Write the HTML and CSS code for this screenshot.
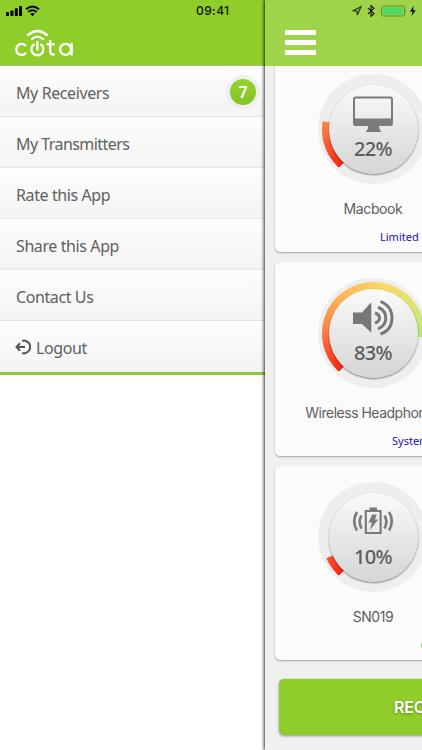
FILE: index.html
```
<!DOCTYPE html>
<html lang="en">
<head>
<meta charset="utf-8">
<title>Cota</title>
<link rel="stylesheet" href="styles.css">
</head>
<body>
<div class="app">
  <nav class="drawer">
    <header class="drawer-head">
      <svg class="logo" viewBox="0 0 60 30" fill="none" stroke="#fff" stroke-width="2.300" stroke-linecap="round" aria-label="cota">
        <path d="M10.300 15.400A5.300 5.600 0 1 0 10.300 23.400"/>
        <path d="M18.600 14.600A6 6 0 1 0 26.200 14.600M22.400 12v7.500"/>
        <path d="M35.200 11.200v9.800q0 3.600 3.600 3.600M32.300 14.300h6.700"/>
        <circle cx="50.600" cy="19.300" r="5.500"/><path d="M56.700 14v10.600"/>
        <path d="M13 5Q22.400-3 32 5M17 9Q22.400 4.200 28 9"/>
      </svg>
    </header>
    <ul class="menu">
      <li><span class="label">My Receivers</span><span class="badge">7</span></li>
      <li><span class="label long">My Transmitters</span></li>
      <li><span class="label">Rate this App</span></li>
      <li><span class="label">Share this App</span></li>
      <li><span class="label">Contact Us</span></li>
      <li><svg class="logout" viewBox="0 0 16 16" fill="none" stroke="#555" stroke-width="2"><path d="M7.200 2.200Q9 .8 11 2A6.300 6.300 0 0 1 11 13.800Q9 15 7.200 13.800M1.500 8H10M5 4.300 1.500 8 5 11.700"/></svg><span class="label">Logout</span></li>
    </ul>
  </nav>

  <main class="panel">
    <header class="panel-head"><span class="burger"><i></i><i></i><i></i></span></header>
    <div class="content">
      <section class="card first">
        <div class="gauge">
          <div class="arc low"></div>
          <div class="knob">
            <svg class="icon" viewBox="0 0 42 38"><path fill="#7b7b7b" fill-rule="evenodd" d="M3.500 1.500h35q2.500 0 2.500 2.500v24.500q0 2.500-2.500 2.500H27l.7 3.500q.3 1.200 1.500 1.500v1H14v-1q1.200-.3 1.500-1.500l.7-3.500H3.500Q1 31 1 28.500v-24Q1 1.500 3.500 1.500ZM3 4.500v19h36v-19q0-1-1-1H4q-1 0-1 1Z"/></svg>
            <span class="pct">22%</span>
          </div>
        </div>
        <h2>Macbook</h2>
        <p class="status">Limited <span class="dot"></span></p>
      </section>
      <section class="card">
        <div class="gauge">
          <div class="arc high"></div>
          <div class="knob">
            <svg class="icon" viewBox="0 0 42 38"><path fill="#777" d="M1 13.500h9L18.500 4q.8-.6.8.5v28q0 1-.8.400L10 25H1Z"/><g fill="none" stroke="#777" stroke-width="2.900"><path d="M23 14Q27.500 15.500 27.500 19t-4.500 5.200M26 8.200Q33.800 11.500 33.800 19T26 30M28.500 2.500Q40 7 40 19T28.500 35.200"/></g></svg>
            <span class="pct">83%</span>
          </div>
        </div>
        <h2 class="wide">Wireless Headphones</h2>
        <p class="status system">System Ready</p>
      </section>
      <section class="card">
        <div class="gauge">
          <div class="arc min"></div>
          <div class="knob">
            <svg class="icon" viewBox="0 0 42 38"><g fill="none" stroke="#7b7b7b"><path stroke-width="2.200" d="M13.800 8h14.800v22H13.800Z"/><path stroke-width="2.700" d="M9.500 12.500Q5.800 18.500 9.500 25.500M5 9Q-.6 18 5 27.500M32.500 12.500Q36.200 18.500 32.500 25.500M37 9Q42.600 18 37 27.500"/></g><path fill="#7b7b7b" d="M17.500 4.500h7.500v3.500h-7.500ZM20 11.500h4.800L23 16.500h3.200L18 27l1.800-7.500h-3.200Z"/></svg>
            <span class="pct">10%</span>
          </div>
        </div>
        <h2>SN019</h2>
        <p class="status"><span class="dot green"></span></p>
      </section>
      <button class="action">RECEIVERS</button>
    </div>
  </main>

  <div class="statusbar">
    <svg class="signal" viewBox="0 0 36 12"><rect x="0" y="7" width="3" height="4" rx=".8"/><rect x="4.400" y="5.500" width="3" height="5.500" rx=".8"/><rect x="8.800" y="3.300" width="3" height="7.700" rx=".8"/><rect x="13" y="1" width="3" height="10" rx=".8"/><g fill="none" stroke="#000" stroke-width="2"><path d="M20 4.300Q26.500-1.300 33 4.300M22.300 7Q26.500 3.500 30.700 7"/></g><path d="M24.200 8.800Q26.500 7 28.800 8.800L26.500 11.200Z"/></svg>
    <span class="time">09:41</span>
    <svg class="right" viewBox="0 0 66 14"><path fill="none" stroke="#1c2a08" stroke-width="1.100" d="M1.200 6.800 9 2.800 5.300 11 5 7Z"/><path fill="none" stroke="#111" stroke-width="1.100" d="M16 4 22 9.700 19 12.300V1.700L22 4.300 16 10"/><rect x="29.500" y="2" width="23" height="10" rx="2" fill="none" stroke="#5d8a28"/><rect x="31" y="3.500" width="20" height="7" rx=".8" fill="#4cd964"/><path fill="#5d8a28" d="M53.500 5.300q1.500 1.700 0 3.400Z"/><path d="M61.700 1.700 58 7.600h2.600L59.500 12l4.200-5.800H61Z"/></svg>
  </div>
</div>
</body>
</html>
```
FILE: styles.css
```
* { box-sizing: border-box; }
body { margin: 0; background: #fff; font-family: "Noto Sans", sans-serif; }
.app { position: relative; display: flex; width: 422px; height: 750px; overflow: hidden; }

.drawer { flex: 0 0 265px; }
.drawer-head { height: 66px; padding: 30px 0 0 15px; background: #8fce2a; border-bottom: 1px solid #a3bb7d; }
.logo { display: block; width: 60px; height: 30px; overflow: visible; }
.menu { list-style: none; margin: 0; padding: 0; border-bottom: 3px solid #8dc63f; }
.menu li { display: flex; align-items: center; height: 51px; padding: 3px 6px 0 16px; background: linear-gradient(#fdfdfd, #f4f4f4); border-bottom: 1px solid #e6e6e6; box-shadow: inset 0 1px #fff; }
.menu li:last-child { border-bottom: 0; }
.label { color: #606060; font-size: 16px; line-height: 24px; letter-spacing: -.4px; white-space: nowrap; }
.long { letter-spacing: -.55px; }
.badge { width: 34px; height: 34px; margin: -2px -1px 0 auto; border: 4px solid #efefef; border-radius: 50%; background: linear-gradient(#94d32f, #84c424); color: #fff; font-size: 16px; font-weight: 600; line-height: 26px; text-align: center; }
.logout { width: 16px; height: 16px; margin: -3px 5px 0 -1px; }

.panel { flex: 0 0 422px; background: #f0f0f0; box-shadow: -1px 0 3px rgba(0, 0, 0, .8); z-index: 1; }
.panel-head { position: relative; z-index: 1; height: 66px; padding: 30px 0 0 20px; background: #9fd44a; }
.burger { display: flex; flex-direction: column; gap: 5px; width: 31px; }
.burger i { height: 5px; background: #fff; }
.content { display: flex; flex-direction: column; gap: 10px; padding: 0 10px; margin-top: -8px; }
.card { width: 196px; height: 194px; padding-top: 16px; background: #fbfbfb; border-radius: 5px; box-shadow: 0 1px 2px rgba(0, 0, 0, .32); }
.gauge { display: grid; place-items: center; width: 110px; height: 110px; margin: 0 auto; border-radius: 50%; background: #eee; }
.arc, .knob { grid-area: 1 / 1; border-radius: 50%; }
.arc { width: 103px; height: 103px; }
.low { background: conic-gradient(from 222deg, #ff2412, #fd8848 57deg, transparent 57.5deg); }
.high { background: conic-gradient(from 222deg, #ff2412, #fd8848 57deg, #ffb356 95deg, #f9d867 150deg, #d9e574 195deg, #bce57c 232deg, transparent 232.5deg); }
.min { background: conic-gradient(from 222deg, #ff2412, #fa5233 24deg, transparent 24.500deg); }
.knob { display: flex; flex-direction: column; align-items: center; width: 89px; height: 89px; padding-top: 10px; background: linear-gradient(#fafafa, #d5d5d5); box-shadow: 0 1px 2px rgba(0, 0, 0, .5); }
.icon { width: 42px; height: 38px; }
.pct { margin-top: 3px; color: #5c5c5c; font-size: 20px; font-weight: 500; line-height: 26px; letter-spacing: -.6px; }
.card h2 { margin: 15px -20px 0; color: #5e5e5e; font: 400 14px/20px Inter, sans-serif; letter-spacing: -.4px; text-align: center; white-space: nowrap; }
.card .wide { letter-spacing: -.5px; }
.status { display: flex; align-items: center; gap: 3px; height: 16px; margin: 10px 0 0 105px; color: #1a0dc4; font-size: 11px; line-height: 16px; white-space: nowrap; }
.system { margin-left: 117px; }
.dot { width: 7px; height: 7px; border-radius: 50%; background: #1a0dc4; }
.dot.green { margin-left: 41px; background: #8fce2a; }
.action { width: 394px; height: 56px; margin: 9px 0 0 4px; padding: 0 0 0 115px; border: 0; border-radius: 5px; background: #8fce2a; box-shadow: 0 1px 3px rgba(0, 0, 0, .4); color: #fff; font: 600 16px Inter, sans-serif; letter-spacing: -.2px; text-align: left; text-shadow: 0 1px 3px rgba(0, 0, 0, .35); }

.statusbar { position: absolute; inset: 0 0 auto; z-index: 2; display: flex; align-items: center; height: 21px; padding: 0 4px 0 6px; }
.signal { width: 36px; height: 12px; }
.time { margin-left: 154px; color: #0b0f04; font: 500 12px/20px Inter, sans-serif; letter-spacing: .4px; }
.right { width: 66px; height: 14px; margin-left: auto; }
```
